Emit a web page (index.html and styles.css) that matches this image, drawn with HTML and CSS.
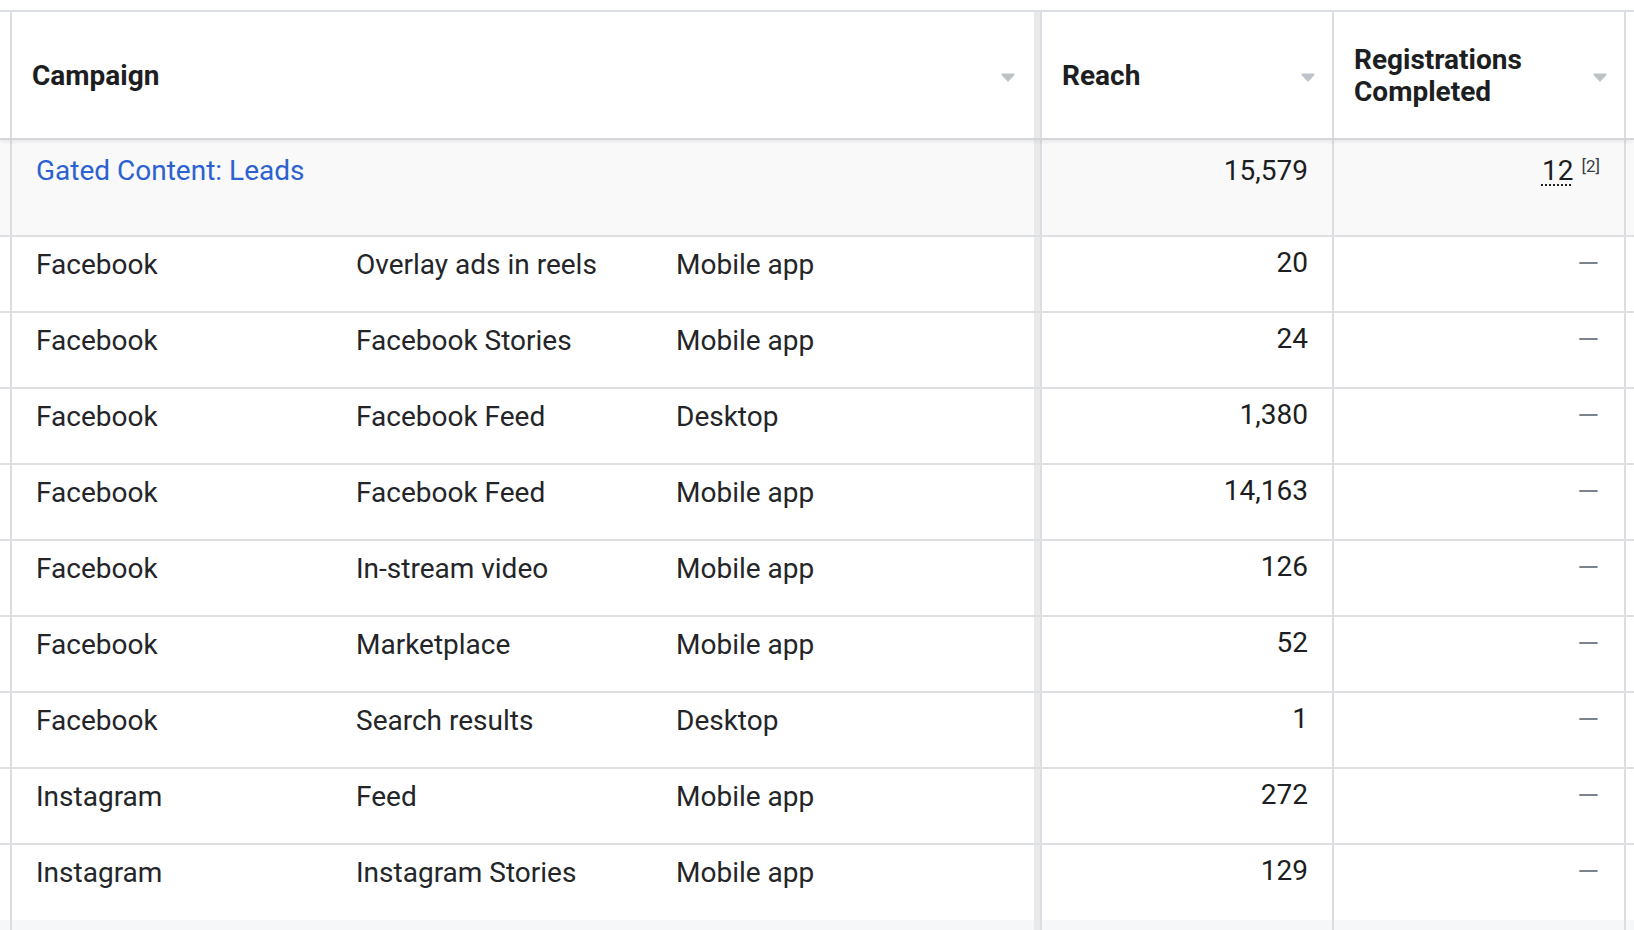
FILE: index.html
```html
<!DOCTYPE html>
<html lang="en">
<head>
<meta charset="utf-8">
<title>Campaign breakdown</title>
<link rel="stylesheet" href="styles.css">
</head>
<body>
<div class="table">
  <div class="row head">
    <div class="cell stub"></div>
    <div class="cell camp hcell hcamp">
      <span class="htext">Campaign</span>
      <svg class="caret" width="14" height="9" viewBox="0 0 14 9"><path d="M1.5 1.5 H12.5 L7 7.5 Z" fill="#bec3c9" stroke="#bec3c9" stroke-width="2" stroke-linejoin="round"/></svg>
    </div>
    <div class="cell num hcell">
      <span class="htext">Reach</span>
      <svg class="caret" width="14" height="9" viewBox="0 0 14 9"><path d="M1.5 1.5 H12.5 L7 7.5 Z" fill="#bec3c9" stroke="#bec3c9" stroke-width="2" stroke-linejoin="round"/></svg>
    </div>
    <div class="cell num hcell">
      <span class="htext">Registrations<br>Completed</span>
      <svg class="caret" width="14" height="9" viewBox="0 0 14 9"><path d="M1.5 1.5 H12.5 L7 7.5 Z" fill="#bec3c9" stroke="#bec3c9" stroke-width="2" stroke-linejoin="round"/></svg>
    </div>
    <div class="cell stub end"></div>
  </div>

  <div class="row group">
    <div class="cell stub"></div>
    <div class="cell camp"><a class="link" href="#">Gated Content: Leads</a></div>
    <div class="cell num val">15,579</div>
    <div class="cell num val"><span class="dotted">12</span><span class="note">[2]</span></div>
    <div class="cell stub end"></div>
  </div>

  <div class="row">
    <div class="cell stub"></div>
    <div class="cell camp sub"><span>Facebook</span><span>Overlay ads in reels</span><span>Mobile app</span></div>
    <div class="cell num val">20</div>
    <div class="cell num val"><span class="dash">—</span></div>
    <div class="cell stub end"></div>
  </div>
  <div class="row">
    <div class="cell stub"></div>
    <div class="cell camp sub"><span>Facebook</span><span>Facebook Stories</span><span>Mobile app</span></div>
    <div class="cell num val">24</div>
    <div class="cell num val"><span class="dash">—</span></div>
    <div class="cell stub end"></div>
  </div>
  <div class="row">
    <div class="cell stub"></div>
    <div class="cell camp sub"><span>Facebook</span><span>Facebook Feed</span><span>Desktop</span></div>
    <div class="cell num val">1,380</div>
    <div class="cell num val"><span class="dash">—</span></div>
    <div class="cell stub end"></div>
  </div>
  <div class="row">
    <div class="cell stub"></div>
    <div class="cell camp sub"><span>Facebook</span><span>Facebook Feed</span><span>Mobile app</span></div>
    <div class="cell num val">14,163</div>
    <div class="cell num val"><span class="dash">—</span></div>
    <div class="cell stub end"></div>
  </div>
  <div class="row">
    <div class="cell stub"></div>
    <div class="cell camp sub"><span>Facebook</span><span>In-stream video</span><span>Mobile app</span></div>
    <div class="cell num val">126</div>
    <div class="cell num val"><span class="dash">—</span></div>
    <div class="cell stub end"></div>
  </div>
  <div class="row">
    <div class="cell stub"></div>
    <div class="cell camp sub"><span>Facebook</span><span>Marketplace</span><span>Mobile app</span></div>
    <div class="cell num val">52</div>
    <div class="cell num val"><span class="dash">—</span></div>
    <div class="cell stub end"></div>
  </div>
  <div class="row">
    <div class="cell stub"></div>
    <div class="cell camp sub"><span>Facebook</span><span>Search results</span><span>Desktop</span></div>
    <div class="cell num val">1</div>
    <div class="cell num val"><span class="dash">—</span></div>
    <div class="cell stub end"></div>
  </div>
  <div class="row">
    <div class="cell stub"></div>
    <div class="cell camp sub"><span>Instagram</span><span>Feed</span><span>Mobile app</span></div>
    <div class="cell num val">272</div>
    <div class="cell num val"><span class="dash">—</span></div>
    <div class="cell stub end"></div>
  </div>
  <div class="row last">
    <div class="cell stub"></div>
    <div class="cell camp sub"><span>Instagram</span><span>Instagram Stories</span><span>Mobile app</span></div>
    <div class="cell num val">129</div>
    <div class="cell num val"><span class="dash">—</span></div>
    <div class="cell stub end"></div>
  </div>
  <div class="row foot">
    <div class="cell stub"></div>
    <div class="cell camp"></div>
    <div class="cell num"></div>
    <div class="cell num"></div>
    <div class="cell stub end"></div>
  </div>
</div>
</body>
</html>
```
FILE: styles.css
```css
* { box-sizing: border-box; }

html, body {
  margin: 0;
  padding: 0;
  background: #ffffff;
}

body {
  font-family: Roboto, "Liberation Sans", Arial, sans-serif;
  font-size: 28px;
  line-height: 32px;
  color: #232528;
  overflow: hidden;
  height: 930px;
}

.table {
  margin-top: 10px;
  border-top: 2px solid #dadde1;
}

.row {
  display: grid;
  grid-template-columns: 10px 1030px 292px 292px 1fr;
  height: 76px;
  border-bottom: 2px solid #dedfe1;
}

.cell {
  min-width: 0;
}

.camp {
  border-left: 2px solid #dadde1;
  border-right: 6px solid #e9eaec;
  padding-left: 24px;
}

.num {
  border-left: 2px solid #dadde1;
}

.stub.end {
  border-left: 2px solid #dadde1;
}

/* header */
.row.head {
  height: 128px;
  border-bottom: 2px solid #d3d5d8;
  position: relative;
  z-index: 1;
  box-shadow: 0 3px 4px -1px rgba(0, 0, 0, 0.07);
}

.hcell {
  display: flex;
  align-items: center;
  justify-content: space-between;
  padding-top: 2px;
  padding-left: 20px;
  padding-right: 17px;
  font-weight: 700;
  color: #1c1e21;
}

.hcamp {
  padding-left: 20px;
  padding-right: 19px;
}

.caret {
  display: block;
  flex: none;
  margin-top: 2px;
}

/* group row */
.row.group {
  height: 97px;
  background: #f9f9fa;
}

.group .camp {
  padding-top: 15px;
}

.link {
  color: #2c62cf;
  text-decoration: none;
}

.group .val {
  padding-top: 15px;
}

.dotted {
  text-decoration: underline dotted 2px;
  text-underline-offset: 4px;
  color: #1c1e21;
}

.note {
  font-size: 17px;
  line-height: 17px;
  vertical-align: 8px;
  margin-left: 8px;
  color: #3a3d42;
}

/* data rows */
.sub {
  display: grid;
  grid-template-columns: 320px 320px 1fr;
  padding-top: 12px;
}

.val {
  text-align: right;
  padding-right: 24px;
  padding-top: 10px;
  color: #1c1e21;
}

.dash {
  display: inline-block;
  color: #7d838c;
  transform: translateY(1px);
  margin-right: 1px;
}

.row.last {
  height: 75px;
  border-bottom: none;
}

.row.foot {
  height: 20px;
  border-bottom: none;
  background: #f6f7f8;
}
```
